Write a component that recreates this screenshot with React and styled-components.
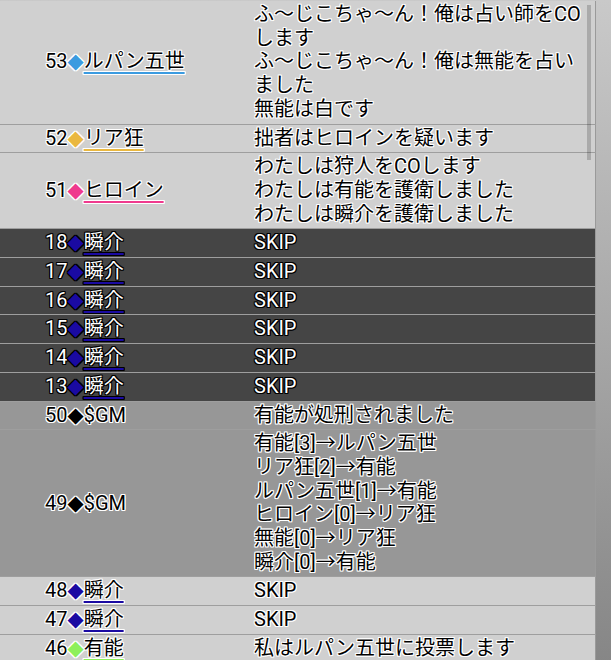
import React from 'react';
import styled, { createGlobalStyle } from 'styled-components';

const GlobalStyle = createGlobalStyle`
  html, body {
    margin: 0;
    padding: 0;
  }
  body {
    min-height: 660px;
    background: linear-gradient(#c9c9c9, #868686);
    font-family: Roboto, "Noto Sans CJK JP", sans-serif;
    overflow: hidden;
  }
`;

const StyledLogWrapper = styled.div`
  position: relative;
  width: 596px;
  padding-top: 1px;
`;

const StyledLogTable = styled.table`
  width: 596px;
  border-collapse: collapse;
  table-layout: fixed;
`;

const rowColors = {
  light: { bg: '#d0d0d0', fg: '#000', halo: '#fff' },
  dark: { bg: '#454545', fg: '#fff', halo: '#000' },
  gm: { bg: '#979797', fg: '#000', halo: '#fff' },
};

const halo = (c) => `
  1px 0 0 ${c}, -1px 0 0 ${c}, 0 1px 0 ${c}, 0 -1px 0 ${c},
  1px 1px 0 ${c}, -1px -1px 0 ${c}, 1px -1px 0 ${c}, -1px 1px 0 ${c}
`;

const StyledRow = styled.tr`
  background-color: ${(p) => rowColors[p.kind].bg};
  color: ${(p) => rowColors[p.kind].fg};
  border-bottom: 1px solid #9e9e9e;
  border-right: 1px solid #9a9a9a;
  text-shadow: ${(p) => halo(rowColors[p.kind].halo)};
`;

const StyledSpeakerCell = styled.td`
  width: 205px;
  padding: 2px 0 2px 45px;
  vertical-align: middle;
  font-size: 20px;
  line-height: 23.7px;
  white-space: nowrap;
`;

const StyledMessageCell = styled.td`
  padding: 2px 4px 2px 4px;
  vertical-align: middle;
  font-size: 20px;
  line-height: 23.7px;
  word-break: break-all;
`;

const StyledDiamond = styled.span`
  color: ${(p) => p.color};
  font-family: "DejaVu Sans", sans-serif;
  font-size: 21px;
  line-height: 0;
  margin: 0 0 0 0;
`;

const StyledName = styled.span`
  text-decoration: ${(p) => (p.underline ? 'underline' : 'none')};
  text-decoration-color: ${(p) => p.color};
  text-decoration-thickness: 2px;
  text-underline-offset: 4px;
`;

const StyledMessageLine = styled.div`
`;

const StyledScrollThumb = styled.div`
  position: absolute;
  top: 5px;
  left: 587px;
  width: 4px;
  height: 155px;
  background-color: rgba(0, 0, 0, 0.18);
`;

const BLUE = '#3b9be0';
const YELLOW = '#eab840';
const PINK = '#ef3a8e';
const NAVY = '#1a0aa2';
const GREEN = '#8ef05a';

const rows = [
  { no: 53, name: 'ルパン五世', color: BLUE, kind: 'light', lines: ['ふ〜じこちゃ〜ん！俺は占い師をCOします', 'ふ〜じこちゃ〜ん！俺は無能を占いました', '無能は白です'] },
  { no: 52, name: 'リア狂', color: YELLOW, kind: 'light', lines: ['拙者はヒロインを疑います'] },
  { no: 51, name: 'ヒロイン', color: PINK, kind: 'light', lines: ['わたしは狩人をCOします', 'わたしは有能を護衛しました', 'わたしは瞬介を護衛しました'] },
  { no: 18, name: '瞬介', color: NAVY, kind: 'dark', lines: ['SKIP'] },
  { no: 17, name: '瞬介', color: NAVY, kind: 'dark', lines: ['SKIP'] },
  { no: 16, name: '瞬介', color: NAVY, kind: 'dark', lines: ['SKIP'] },
  { no: 15, name: '瞬介', color: NAVY, kind: 'dark', lines: ['SKIP'] },
  { no: 14, name: '瞬介', color: NAVY, kind: 'dark', lines: ['SKIP'] },
  { no: 13, name: '瞬介', color: NAVY, kind: 'dark', lines: ['SKIP'] },
  { no: 50, name: '$GM', color: '#000', kind: 'gm', gm: true, lines: ['有能が処刑されました'] },
  { no: 49, name: '$GM', color: '#000', kind: 'gm', gm: true, lines: ['有能[3]→ルパン五世', 'リア狂[2]→有能', 'ルパン五世[1]→有能', 'ヒロイン[0]→リア狂', '無能[0]→リア狂', '瞬介[0]→有能'] },
  { no: 48, name: '瞬介', color: NAVY, kind: 'light', lines: ['SKIP'] },
  { no: 47, name: '瞬介', color: NAVY, kind: 'light', lines: ['SKIP'] },
  { no: 46, name: '有能', color: GREEN, kind: 'light', lines: ['私はルパン五世に投票します'] },
];

const App = () => (
  <>
    <GlobalStyle />
    <StyledLogWrapper>
      <StyledLogTable>
        <tbody>
          {rows.map((row) => (
            <StyledRow key={row.no} kind={row.kind}>
              <StyledSpeakerCell>
                {row.no}
                <StyledDiamond color={row.color}>◆</StyledDiamond>
                <StyledName underline={!row.gm} color={row.color}>{row.name}</StyledName>
              </StyledSpeakerCell>
              <StyledMessageCell>
                {row.lines.map((line) => (
                  <StyledMessageLine key={line}>{line}</StyledMessageLine>
                ))}
              </StyledMessageCell>
            </StyledRow>
          ))}
        </tbody>
      </StyledLogTable>
      <StyledScrollThumb />
    </StyledLogWrapper>
  </>
);

export default App;
